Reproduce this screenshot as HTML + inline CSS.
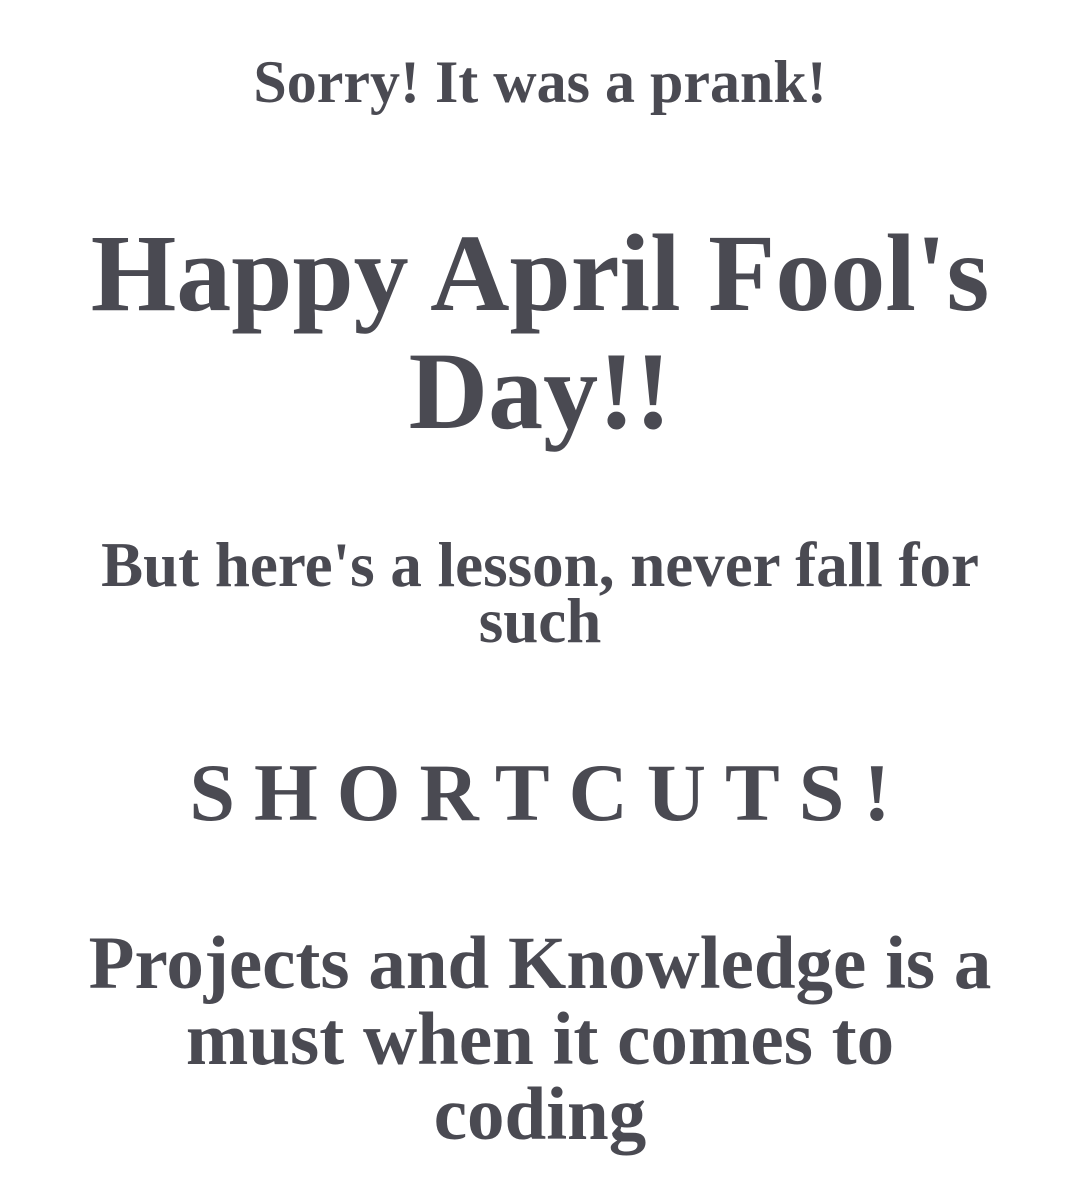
<!DOCTYPE html>
<html><head><meta charset="utf-8"><style>
html,body{margin:0;padding:0;background:#fff;width:1080px;height:1186px;overflow:hidden}
.l{position:absolute;left:0;width:1080px;text-align:center;white-space:nowrap;color:#4a4a52;font-family:"Liberation Serif","DejaVu Serif",serif;font-weight:bold;line-height:1}
</style></head><body>
<div class="l" style="top:52px;font-size:60px">Sorry! It was a prank!</div>
<div class="l" style="top:218px;font-size:110px">Happy April Fool's</div>
<div class="l" style="top:336px;font-size:110px">Day!!</div>
<div class="l" style="top:534px;font-size:63px">But here's a lesson, never fall for</div>
<div class="l" style="top:590px;font-size:63px">such</div>
<div class="l" style="top:752px;font-size:82px;letter-spacing:19px;padding-left:19px;box-sizing:border-box">SHORTCUTS!</div>
<div class="l" style="top:926px;font-size:75px">Projects and Knowledge is a</div>
<div class="l" style="top:1002px;font-size:75px">must when it comes to</div>
<div class="l" style="top:1077px;font-size:75px">coding</div>
</body></html>
